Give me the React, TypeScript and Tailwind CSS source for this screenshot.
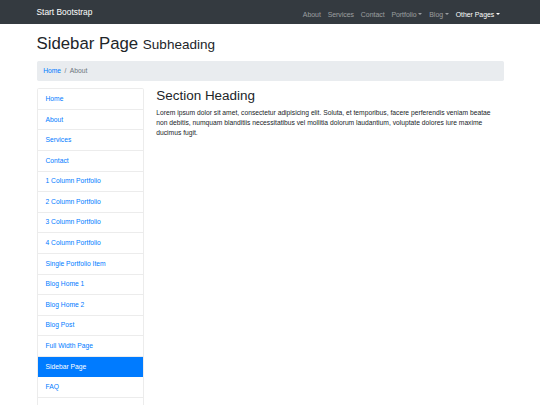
const sideLinks = [
  'Home',
  'About',
  'Services',
  'Contact',
  '1 Column Portfolio',
  '2 Column Portfolio',
  '3 Column Portfolio',
  '4 Column Portfolio',
  'Single Portfolio Item',
  'Blog Home 1',
  'Blog Home 2',
  'Blog Post',
  'Full Width Page',
  'Sidebar Page',
  'FAQ',
  '404',
  'Pricing Table',
]

function Caret() {
  return (
    <span className="ml-[1.8px] inline-block h-0 w-0 border-x-[2px] border-t-[2px] border-x-transparent border-t-current align-[1.8px]" />
  )
}

function NavBar() {
  const links = [
    { label: 'About' },
    { label: 'Services' },
    { label: 'Contact' },
    { label: 'Portfolio', caret: true },
    { label: 'Blog', caret: true },
    { label: 'Other Pages', caret: true, active: true },
  ]
  return (
    <nav className="h-[23.5px] bg-[#343a40]">
      <div className="mx-auto flex h-full w-[467px] items-center justify-between">
        <a className="text-[8.4px] leading-[12px] text-white">Start Bootstrap</a>
        <ul className="flex items-center">
          {links.map((l) => (
            <li key={l.label}>
              <a
                className={`px-[3.4px] text-[6.9px] leading-[10px] ${
                  l.active ? 'text-white' : 'text-white/50'
                }`}
              >
                {l.label}
                {l.caret && <Caret />}
              </a>
            </li>
          ))}
        </ul>
      </div>
    </nav>
  )
}

export default function App() {
  return (
    <div className="h-[405px] overflow-hidden bg-white font-['Liberation_Sans',Arial,sans-serif] text-[#212529]">
      <NavBar />

      <div className="mx-auto w-[467px]">
        <h1 className="mt-[10px] mb-[6.7px] text-[16.8px] leading-[20.2px] font-medium">
          Sidebar Page <small className="text-[13.5px] font-normal">Subheading</small>
        </h1>

        <ol className="mb-[6.7px] flex rounded-[1.7px] bg-[#e9ecef] px-[6.7px] py-[5px] text-[6.73px] leading-[10.1px]">
          <li>
            <a className="text-[#007bff]">Home</a>
          </li>
          <li className="text-[#6c757d]">
            <span className="px-[3.4px]">/</span>About
          </li>
        </ol>

        <div className="flex gap-[12.6px]">
          <div className="w-[107.2px] shrink-0">
            <div className="flex flex-col rounded-[1.7px] border border-[#ececec]">
              {sideLinks.map((name) => {
                const active = name === 'Sidebar Page'
                return (
                  <a
                    key={name}
                    className={`border-b px-[8px] py-[4.75px] text-[6.73px] leading-[10.1px] ${
                      active
                        ? 'border-[#007bff] bg-[#007bff] text-white'
                        : 'border-[#ececec] text-[#007bff]'
                    }`}
                  >
                    {name}
                  </a>
                )
              })}
            </div>
          </div>

          <div className="flex-1">
            <h2 className="mb-[3.4px] text-[13.46px] leading-[16.15px] font-medium">Section Heading</h2>
            <p className="text-[6.73px] leading-[10.1px]">
              Lorem ipsum dolor sit amet, consectetur adipisicing elit. Soluta, et temporibus, facere
              perferendis veniam beatae non debitis, numquam blanditiis necessitatibus vel mollitia
              dolorum laudantium, voluptate dolores iure maxime ducimus fugit.
            </p>
          </div>
        </div>
      </div>
    </div>
  )
}
